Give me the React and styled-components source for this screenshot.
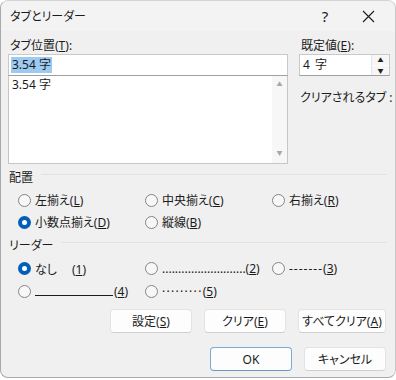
import React from "react";
import styled, { createGlobalStyle } from "styled-components";

const GlobalStyle = createGlobalStyle`
    html, body {
        margin: 0;
        padding: 0;
        background: #ffffff;
    }
    body {
        font-family: "Noto Sans", "Noto Sans CJK JP", sans-serif;
        font-size: 12px;
        font-feature-settings: "palt";
        color: #1b1b1b;
    }
`

function Radio({ checked, children }) {
    return (
        <RadioItem>
            <RadioCircle checked={checked} />
            <RadioLabel>{children}</RadioLabel>
        </RadioItem>
    )
}

function App() {
    return (
        <>
            <GlobalStyle />
            <Dialog>
                <TitleBar>
                    <Title>タブとリーダー</Title>
                    <TitleButton>?</TitleButton>
                    <TitleButton wide>
                        <svg width="13" height="13" viewBox="0 0 13 13">
                            <path d="M1 1 L12 12 M12 1 L1 12" stroke="#1b1b1b" strokeWidth="1.1" fill="none" />
                        </svg>
                    </TitleButton>
                </TitleBar>

                <Body>
                    <TopGrid>
                        <Column>
                            <FieldLabel>タブ位置(<u>T</u>):</FieldLabel>
                            <TextInput>
                                <Selected>3.54 字</Selected>
                            </TextInput>
                            <ListBox>
                                <ListText>3.54 字</ListText>
                                <ScrollTrack>
                                    <Arrow color="#a8a8a8">▲</Arrow>
                                    <Arrow color="#a8a8a8">▼</Arrow>
                                </ScrollTrack>
                            </ListBox>
                        </Column>
                        <Column>
                            <FieldLabel>既定値(<u>E</u>):</FieldLabel>
                            <SpinBox>
                                <SpinText>4 字</SpinText>
                                <Spinner>
                                    <SpinHalf>▲</SpinHalf>
                                    <SpinHalf>▼</SpinHalf>
                                </Spinner>
                            </SpinBox>
                            <ClearLabel>クリアされるタブ :</ClearLabel>
                        </Column>
                    </TopGrid>

                    <GroupHeading>
                        <span>配置</span>
                        <Rule />
                    </GroupHeading>
                    <RadioGrid rowHeight={22}>
                        <Radio>左揃え(<u>L</u>)</Radio>
                        <Radio>中央揃え(<u>C</u>)</Radio>
                        <Radio>右揃え(<u>R</u>)</Radio>
                        <Radio checked>小数点揃え(<u>D</u>)</Radio>
                        <Radio>縦線(<u>B</u>)</Radio>
                    </RadioGrid>

                    <GroupHeading second>
                        <span>リーダー</span>
                        <Rule />
                    </GroupHeading>
                    <RadioGrid rowHeight={23}>
                        <Radio checked>なし<Gap>(<u>1</u>)</Gap></Radio>
                        <Radio>..........................(<u>2</u>)</Radio>
                        <Radio><Dashes>-------</Dashes>(<u>3</u>)</Radio>
                        <Radio><Underscore />(<u>4</u>)</Radio>
                        <Radio><Dots>·········</Dots>(<u>5</u>)</Radio>
                    </RadioGrid>

                    <ButtonRow>
                        <Button>設定(<u>S</u>)</Button>
                        <Button>クリア(<u>E</u>)</Button>
                        <Button wide>すべてクリア(<u>A</u>)</Button>
                    </ButtonRow>
                    <FooterRow>
                        <Button primary>OK</Button>
                        <Button>キャンセル</Button>
                    </FooterRow>
                </Body>
            </Dialog>
        </>
    )
}

const Dialog = styled.div`
    box-sizing: border-box;
    width: 396px;
    height: 378px;
    background: #f0f0f0;
    border: 1px solid #a9a9a9;
    border-top-color: #d4d4d4;
    border-right-color: #c8c8c8;
    border-radius: 8px;
    overflow: hidden;
    display: flex;
    flex-direction: column;
`

const TitleBar = styled.div`
    height: 30px;
    display: flex;
    align-items: center;
    background: #f3f3f3;
`

const Title = styled.div`
    flex: 1;
    padding-left: 9px;
    font-size: 12px;
`

const TitleButton = styled.div`
    width: ${p => (p.wide ? 46 : 40)}px;
    height: 30px;
    display: flex;
    align-items: center;
    justify-content: center;
    font-size: 15px;
    margin-right: ${p => (p.wide ? 4 : 0)}px;
`

const Body = styled.div`
    padding: 6px 7px 0 7px;
    display: flex;
    flex-direction: column;
`

const TopGrid = styled.div`
    display: grid;
    grid-template-columns: 280px 91px;
    column-gap: 11px;
`

const Column = styled.div`
    display: flex;
    flex-direction: column;
`

const FieldLabel = styled.div`
    height: 17px;
    line-height: 17px;
    padding-left: 2px;
`

const TextInput = styled.div`
    box-sizing: border-box;
    height: 22px;
    background: #ffffff;
    border: 1px solid #c9c9c9;
    border-bottom-color: #a0a0a0;
    display: flex;
    align-items: center;
    padding-left: 2px;
`

const Selected = styled.span`
    background: #9ccaf0;
    line-height: 16px;
    padding: 0 1px;
    color: #1b1b1b;
`

const ListBox = styled.div`
    box-sizing: border-box;
    height: 88px;
    background: #ffffff;
    border: 1px solid #c6c6c6;
    border-top: none;
    display: flex;
`

const ListText = styled.div`
    flex: 1;
    padding: 1px 0 0 3px;
    line-height: 16px;
`

const ScrollTrack = styled.div`
    width: 15px;
    background: #f7f7f7;
    display: flex;
    flex-direction: column;
    justify-content: space-between;
    align-items: center;
    padding: 4px 0 6px;
`

const Arrow = styled.span`
    font-size: 6px;
    color: ${p => p.color};
    line-height: 8px;
`

const SpinBox = styled.div`
    box-sizing: border-box;
    height: 22px;
    background: #ffffff;
    border: 1px solid #c9c9c9;
    border-bottom-color: #a0a0a0;
    display: flex;
`

const SpinText = styled.div`
    flex: 1;
    padding-left: 3px;
    line-height: 20px;
    word-spacing: 2px;
`

const Spinner = styled.div`
    width: 17px;
    display: flex;
    flex-direction: column;
    gap: 1px;
    background: #ffffff;
    border-left: 1px solid #e6e6e6;
`

const SpinHalf = styled.div`
    flex: 1;
    display: flex;
    align-items: center;
    justify-content: center;
    font-size: 6px;
    color: #222222;
    background: #f6f6f6;
`

const ClearLabel = styled.div`
    margin-top: 13px;
    line-height: 17px;
    padding-left: 1px;
    white-space: nowrap;
`

const GroupHeading = styled.div`
    display: flex;
    align-items: center;
    gap: 8px;
    margin-top: ${p => (p.second ? 4 : 5)}px;
    height: 17px;
    line-height: 17px;
    padding-left: 1px;
    padding-right: 1px;
`

const Rule = styled.div`
    flex: 1;
    height: 1px;
    background: #e2e2e2;
    margin-top: -6px;
`

const RadioGrid = styled.div`
    display: grid;
    grid-template-columns: 127px 127px 1fr;
    grid-auto-rows: ${p => p.rowHeight}px;
    padding-left: 10px;
    margin-top: 3px;
`

const RadioItem = styled.div`
    display: flex;
    align-items: center;
    white-space: nowrap;
`

const RadioCircle = styled.span`
    box-sizing: border-box;
    width: 13px;
    height: 13px;
    border-radius: 50%;
    flex: none;
    border: ${p => (p.checked ? "none" : "1px solid #858585")};
    background: ${p => (p.checked ? "#005fb8" : "#f7f7f7")};
    display: flex;
    align-items: center;
    justify-content: center;
    &::after {
        content: "";
        display: ${p => (p.checked ? "block" : "none")};
        width: 5px;
        height: 5px;
        border-radius: 50%;
        background: #ffffff;
    }
`

const RadioLabel = styled.span`
    margin-left: 4px;
`

const Gap = styled.span`
    margin-left: 15px;
`

const Dashes = styled.span`
    letter-spacing: 1px;
`

const Underscore = styled.span`
    display: inline-block;
    width: 78px;
    height: 9px;
    border-bottom: 1px solid #1b1b1b;
    margin-right: 1px;
    vertical-align: baseline;
`

const Dots = styled.span`
    letter-spacing: 1.3px;
`

const ButtonRow = styled.div`
    display: flex;
    justify-content: flex-end;
    gap: 12px;
    margin-top: 6px;
    padding-right: 2px;
`

const FooterRow = styled(ButtonRow)`
    margin-top: 14px;
`

const Button = styled.div`
    box-sizing: border-box;
    width: ${p => (p.wide ? 88 : 82)}px;
    height: 24px;
    display: flex;
    align-items: center;
    justify-content: center;
    background: #fdfdfd;
    border: 1px solid ${p => (p.primary ? "#7ea8d6" : "#e3e3e3")};
    border-bottom-color: ${p => (p.primary ? "#6b97c8" : "#cfcfcf")};
    border-radius: 4px;
    white-space: nowrap;
`

export default App;
